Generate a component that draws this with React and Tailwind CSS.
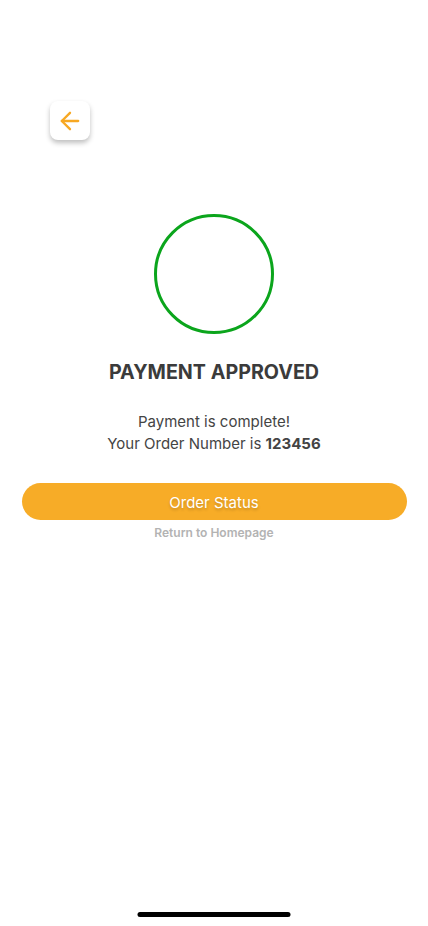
import { ArrowLeft } from "lucide-react"

const App = () => {
  return (
    <div
      className="relative w-[428px] h-[926px] bg-white flex flex-col items-center overflow-hidden"
      style={{ fontFamily: "Inter, 'Noto Sans', sans-serif" }}
    >
      {/* Back button */}
      <div className="w-full pl-[50px] pt-[101px]">
        <button className="w-[40px] h-[39px] rounded-[8px] bg-white flex items-center justify-center shadow-[0_3px_5px_rgba(0,0,0,0.25)]">
          <ArrowLeft className="w-[28px] h-[28px] text-[#f7a823]" strokeWidth={2} />
        </button>
      </div>

      {/* Status circle */}
      <div className="mt-[74px] w-[120px] h-[120px] rounded-full border-[3px] border-[#0ba51c]" />

      <h1 className="mt-[26px] text-[19.7px] leading-[24px] font-bold text-[#3b3b3b]">
        PAYMENT APPROVED
      </h1>

      <div className="mt-[27px] text-center text-[15px] leading-[22px] text-[#444]">
        <p>Payment is complete!</p>
        <p>
          Your Order Number is <span className="font-bold">123456</span>
        </p>
      </div>

      <button className="mt-[28px] w-[385px] h-[37px] pt-[3px] rounded-full bg-[#f7ac27] text-white text-[15px] [text-shadow:0_2px_3px_rgba(0,0,0,0.2)]">
        Order Status
      </button>

      <p className="mt-[5px] text-[12px] leading-[16px] font-semibold text-[#b3b3b3]">Return to Homepage</p>

      {/* Home indicator */}
      <div className="absolute bottom-[9px] left-1/2 -translate-x-1/2 w-[153px] h-[5px] rounded-full bg-black" />
    </div>
  )
}

export default App
